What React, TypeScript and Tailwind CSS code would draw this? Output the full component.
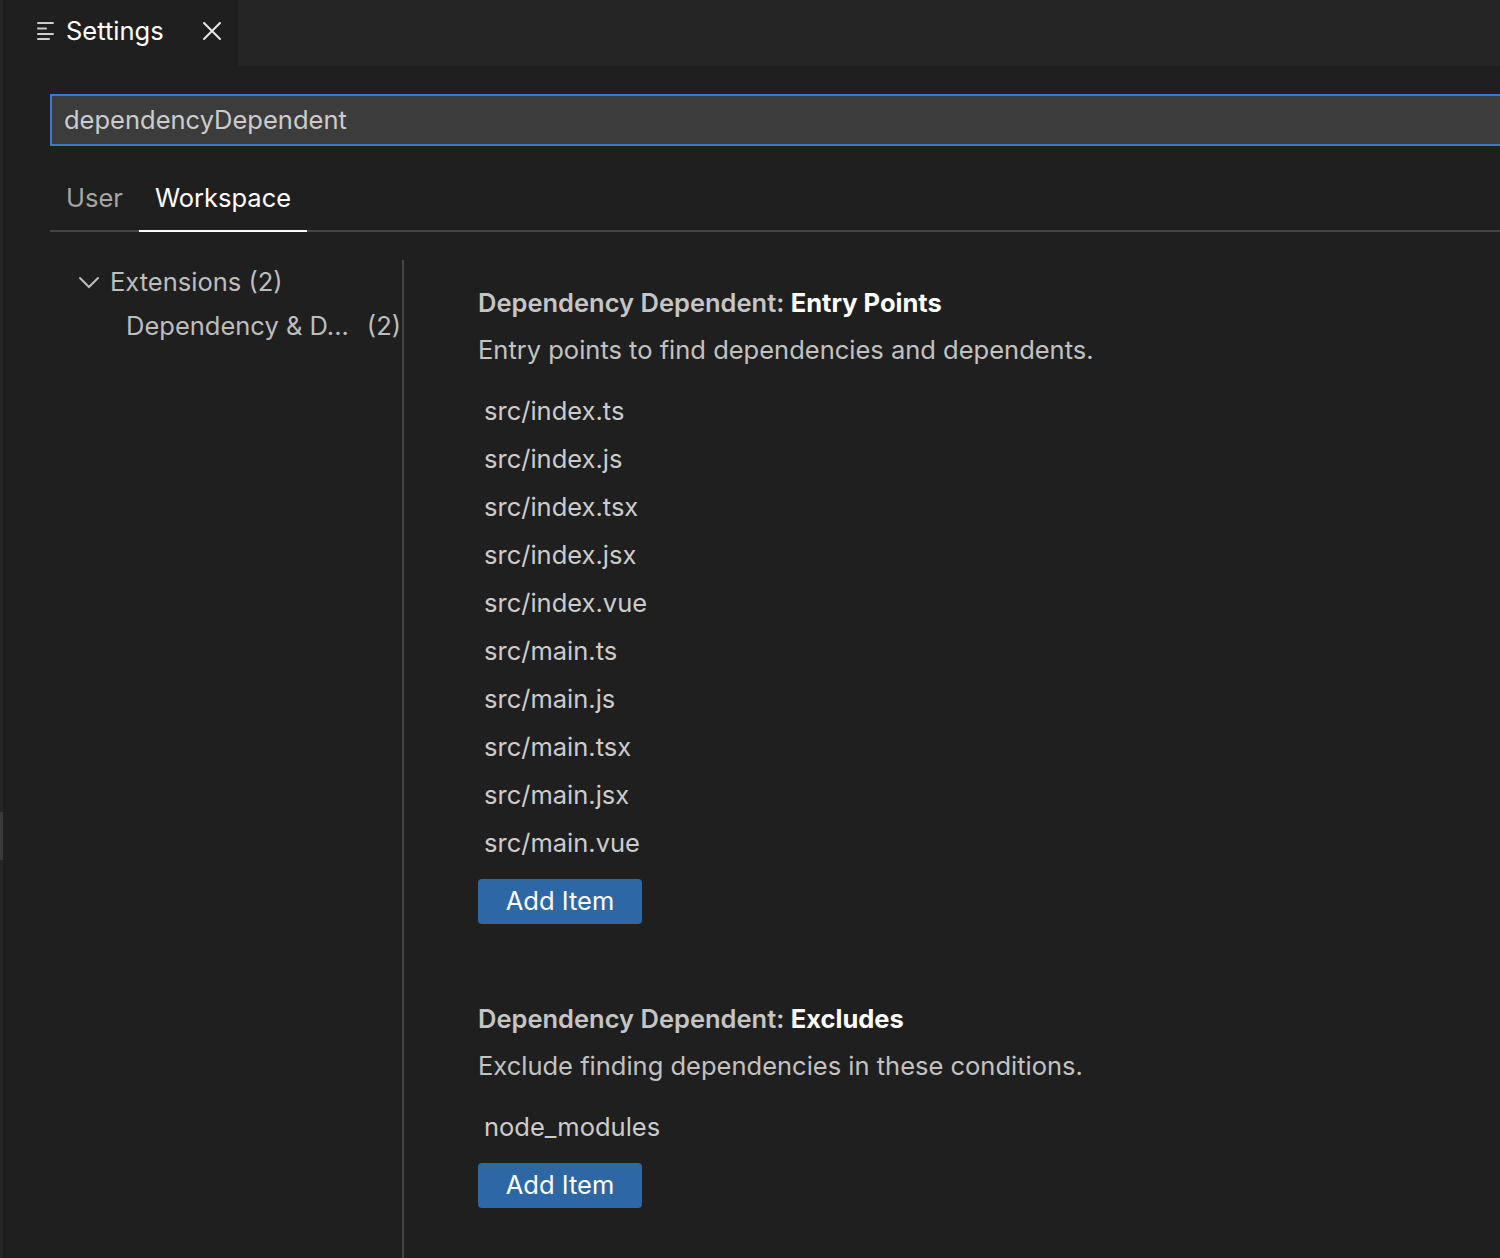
const entryPoints = [
  "src/index.ts",
  "src/index.js",
  "src/index.tsx",
  "src/index.jsx",
  "src/index.vue",
  "src/main.ts",
  "src/main.js",
  "src/main.tsx",
  "src/main.jsx",
  "src/main.vue",
];

function ListIcon() {
  return (
    <svg width="18" height="20" viewBox="0 0 18 20" className="shrink-0">
      <g stroke="#cccccc" strokeWidth="2" strokeLinecap="round">
        <line x1="1" y1="2" x2="16" y2="2" />
        <line x1="1" y1="7.5" x2="9" y2="7.5" />
        <line x1="1" y1="13" x2="16" y2="13" />
        <line x1="1" y1="18" x2="12" y2="18" />
      </g>
    </svg>
  );
}

function CloseIcon() {
  return (
    <svg width="20" height="20" viewBox="0 0 20 20">
      <path d="M2 2 L18 18 M18 2 L2 18" stroke="#e6e6e6" strokeWidth="2" strokeLinecap="round" />
    </svg>
  );
}

function Chevron() {
  return (
    <svg width="22" height="14" viewBox="0 0 22 14">
      <path d="M2 3 L11 12 L20 3" fill="none" stroke="#bdbdbd" strokeWidth="2" strokeLinecap="round" />
    </svg>
  );
}

function ArrayItems({ items }: { items: string[] }) {
  return (
    <div className="flex flex-col pl-[6px]">
      {items.map((item) => (
        <div key={item} className="h-[48px] flex items-center text-[25.5px] text-[#cccccc]">
          {item}
        </div>
      ))}
    </div>
  );
}

function AddItem() {
  return (
    <button className="h-[45px] w-[164px] rounded-[4px] bg-[#2d67a6] text-[25.5px] text-white flex items-center justify-center">
      Add Item
    </button>
  );
}

function SettingBlock({
  category,
  name,
  description,
  items,
}: {
  category: string;
  name: string;
  description: string;
  items: string[];
}) {
  return (
    <div className="flex flex-col">
      <div className="text-[25.5px] leading-[34px] font-semibold">
        <span className="text-[#c5c5c5]">{category}: </span>
        <span className="text-white font-bold">{name}</span>
      </div>
      <div className="mt-[13px] text-[25.5px] leading-[34px] text-[#c2c2c2]">{description}</div>
      <div className="mt-[20px]">
        <ArrayItems items={items} />
      </div>
      <div className="mt-[12px]">
        <AddItem />
      </div>
    </div>
  );
}

export default function App() {
  return (
    <div
      className="w-[1500px] h-[1258px] overflow-hidden flex bg-[#1f1f1f]"
      style={{ fontFamily: "Inter, 'Noto Sans', sans-serif" }}
    >
      <div className="w-[3px] shrink-0 bg-[#262626] flex flex-col">
        <div className="mt-[812px] h-[48px] bg-[#3a3a3a]" />
      </div>

      <div className="flex-1 flex flex-col min-w-0">
        {/* tab bar */}
        <div className="h-[66px] flex bg-[#252525]">
          <div className="w-[235px] bg-[#1f1f1f] flex items-center pl-[34px] gap-[11px] pb-[4px]">
            <ListIcon />
            <span className="text-[25.5px] text-white">Settings</span>
            <span className="ml-[27px]">
              <CloseIcon />
            </span>
          </div>
        </div>

        {/* body */}
        <div className="flex-1 flex flex-col pl-[47px]">
          <div className="mt-[28px] h-[52px] border-2 border-[#3a7ad0] border-r-0 bg-[#3c3c3c] flex items-center pl-[12px] text-[25.5px] text-[#cccccc]">
            dependencyDependent
          </div>

          <div className="mt-[23px] flex border-b-2 border-[#454545] h-[63px]">
            <div className="px-[16px] flex items-center text-[25.5px] text-[#a6a6a6] pb-[2px]">User</div>
            <div className="px-[16px] flex items-center text-[25.5px] text-white border-b-2 border-white mb-[-2px] pb-[2px]">
              Workspace
            </div>
          </div>

          <div className="flex-1 flex">
            <div className="w-[354px] shrink-0 border-r-2 border-[#444444] mt-[28px] flex flex-col">
              <div className="h-[44px] flex items-center pl-[28px] gap-[10px] text-[25.5px] text-[#bdbdbd] whitespace-nowrap">
                <Chevron />
                <span>Extensions (2)</span>
              </div>
              <div className="h-[44px] flex items-center pl-[76px] text-[25.5px] text-[#bdbdbd] whitespace-nowrap">
                <span>Dependency &amp; D...</span>
                <span className="ml-[18px]">(2)</span>
              </div>
            </div>

            <div className="flex-1 pl-[74px] pt-[54px] flex flex-col gap-[78px]">
              <SettingBlock
                category="Dependency Dependent"
                name="Entry Points"
                description="Entry points to find dependencies and dependents."
                items={entryPoints}
              />
              <SettingBlock
                category="Dependency Dependent"
                name="Excludes"
                description="Exclude finding dependencies in these conditions."
                items={["node_modules"]}
              />
            </div>
          </div>
        </div>
      </div>
    </div>
  );
}
